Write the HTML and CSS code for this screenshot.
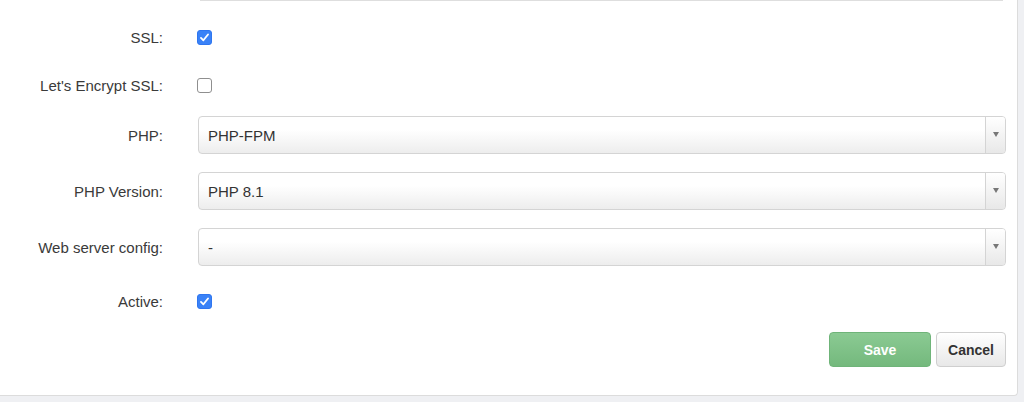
FILE: index.html
```html
<!DOCTYPE html>
<html lang="en">
<head>
  <meta charset="UTF-8">
  <meta name="viewport" content="width=device-width, initial-scale=1.0">
  <title>Edit Domain</title>
  <link rel="stylesheet" href="styles.css">
</head>
<body>

  <div class="panel">
    <!-- bottom edge of the field above -->
    <div class="prev-field"></div>

    <div class="form-row check-row">
      <label for="ssl">SSL:</label>
      <div><input type="checkbox" id="ssl" checked></div>
    </div>

    <div class="form-row check-row">
      <label for="letsencrypt">Let's Encrypt SSL:</label>
      <div><input type="checkbox" id="letsencrypt"></div>
    </div>

    <div class="form-row">
      <label for="php">PHP:</label>
      <div class="select-wrap">
        <select id="php">
          <option>PHP-FPM</option>
          <option>FastCGI</option>
        </select>
      </div>
    </div>

    <div class="form-row">
      <label for="phpVersion">PHP Version:</label>
      <div class="select-wrap">
        <select id="phpVersion">
          <option>PHP 8.1</option>
          <option>PHP 8.0</option>
          <option>PHP 7.4</option>
        </select>
      </div>
    </div>

    <div class="form-row">
      <label for="webConfig">Web server config:</label>
      <div class="select-wrap">
        <select id="webConfig">
          <option>-</option>
        </select>
      </div>
    </div>

    <div class="form-row check-row">
      <label for="active">Active:</label>
      <div><input type="checkbox" id="active" checked></div>
    </div>

    <div class="actions">
      <button class="btn btn-save">Save</button>
      <button class="btn btn-cancel">Cancel</button>
    </div>
  </div>

</body>
</html>
```

FILE: styles.css
```css
body {
  margin: 0;
  background: #eff0f3;
  color: #333;
  font-family: "Liberation Sans", Arial, Helvetica, sans-serif;
  font-size: 15px;
}
.panel {
  width: 1018px;
  box-sizing: border-box;
  background: #fff;
  border-right: 1px solid #dcdcdc;
  border-bottom: 1px solid #dcdcdc;
  border-bottom-right-radius: 4px;
  padding: 0 11px 28px 0;
}
.prev-field {
  height: 1px;
  background: #dedede;
  margin: 0 3px 19px 200px;
}
.form-row {
  display: grid;
  grid-template-columns: 163px 1fr;
  column-gap: 35px;
  align-items: center;
  min-height: 38px;
  margin-bottom: 18px;
}
.form-row label {
  text-align: right;
  color: #3a3a3a;
}
.check-row {
  min-height: 34px;
  margin-bottom: 14px;
}
.check-row > div {
  display: flex;
  align-items: center;
}
input[type="checkbox"] {
  appearance: none;
  -webkit-appearance: none;
  width: 15px;
  height: 15px;
  margin: 0 0 0 -1px;
  border: 1px solid #8f8f8f;
  border-radius: 3px;
  background: #fff;
}
input[type="checkbox"]:checked {
  border-color: #2f76f0;
  background: #3a82f7 url("data:image/svg+xml;utf8,<svg xmlns='http://www.w3.org/2000/svg' viewBox='0 0 14 14'><path d='M3.2 7.4 L5.8 10 L10.8 3.8' fill='none' stroke='white' stroke-width='2' stroke-linecap='round' stroke-linejoin='round'/></svg>") center / 13px 13px no-repeat;
}
.select-wrap {
  position: relative;
}
.select-wrap select {
  appearance: none;
  -webkit-appearance: none;
  width: 100%;
  height: 38px;
  box-sizing: border-box;
  padding: 0 30px 0 9px;
  border: 1px solid #d4d4d4;
  border-radius: 4px;
  background: linear-gradient(to bottom, #ffffff 0%, #ffffff 35%, #ededed 100%);
  color: #333;
  font-family: inherit;
  font-size: 15px;
}
/* arrow box on the right of the select */
.select-wrap::after {
  content: "";
  position: absolute;
  top: 1px;
  right: 1px;
  bottom: 1px;
  width: 19px;
  border-left: 1px solid #d4d4d4;
  border-radius: 0 3px 3px 0;
  background:
    linear-gradient(to bottom, #ffffff, #e8e8e8);
  pointer-events: none;
}
.select-wrap::before {
  content: "";
  position: absolute;
  top: 16px;
  right: 7px;
  border-left: 3.5px solid transparent;
  border-right: 3.5px solid transparent;
  border-top: 5px solid #777;
  z-index: 1;
  pointer-events: none;
}
.actions {
  display: flex;
  justify-content: flex-end;
  gap: 5px;
  margin-top: 1px;
}
.btn {
  height: 35px;
  border-radius: 4px;
  font-family: inherit;
  font-size: 14px;
  font-weight: bold;
  cursor: pointer;
}
.btn-save {
  width: 102px;
  color: #fff;
  border: 1px solid #6fb479;
  background: linear-gradient(to bottom, #8bca93, #74b97d);
}
.btn-cancel {
  width: 70px;
  color: #333;
  border: 1px solid #cfcfcf;
  background: linear-gradient(to bottom, #ffffff, #e8e8e8);
}
```
